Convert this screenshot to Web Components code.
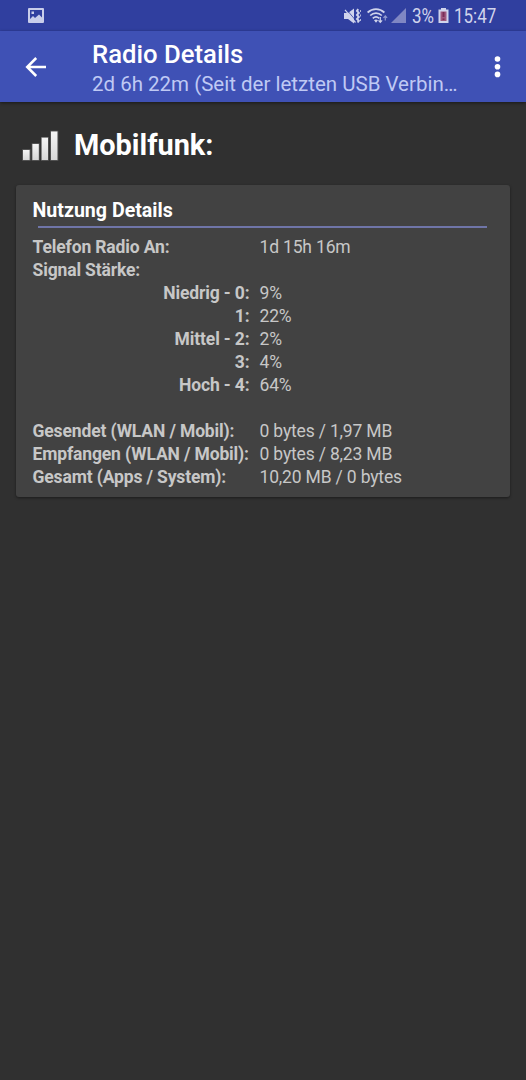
<!DOCTYPE html>
<html lang="de">
<head>
<meta charset="utf-8">
<title>Radio Details</title>
<style>
    body {
        margin: 0;
        background: #303030;
        font-family: Roboto, "Liberation Sans", sans-serif;
    }
</style>
</head>
<body>
<radio-screen></radio-screen>
<script>
/**
 * Base class: puts the markup of template() into an open shadow root
 */
class BaseElement extends HTMLElement {
    constructor() {
        super();
        const shadowRoot = this.attachShadow({ mode: 'open' });
        const template = document.createElement('template');
        template.innerHTML = this.template();
        shadowRoot.appendChild(document.importNode(template.content, true));
    }
}

/**
 * Android status bar
 */
class StatusBar extends BaseElement {
    template() {
        return `
            <style>
                :host {
                    display: flex;
                    align-items: center;
                    box-sizing: border-box;
                    height: 31px;
                    padding: 0 30px 0 28px;
                    background: #303f9f;
                    color: #d0d4ec;
                    font-size: 19.500px;
                    line-height: 31px;
                }
                svg { display: block; flex: none; }
                .space { flex: 1; }
                .mute { margin-right: 6px; }
                .wifi { margin-right: 3px; }
                .signal { margin-right: 6px; }
                .percent { width: 26px; }
                .battery { margin-right: 5px; }
                .time { width: 42px; }
                /* the status font is slightly condensed */
                span {
                    display: block;
                    padding-top: 1px;
                    white-space: nowrap;
                    transform: scaleX(.87);
                    transform-origin: 0 50%;
                }
            </style>
            <svg width="16" height="15" viewBox="0 0 16 15">
                <path fill="#c8cdea" fill-rule="evenodd" d="M1 0h14q1 0 1 1v13q0 1-1 1H1q-1 0-1-1V1q0-1 1-1zM2 2v9l3-3 2 2 4-3.500 3 3V2zM3.500 3.500h2.500v2.500h-2.500z"/>
            </svg>
            <div class="space"></div>
            <svg class="mute" width="17" height="16" viewBox="0 0 17 16" fill="none" stroke="#d0d4ec">
                <path fill="#d0d4ec" stroke="none" d="M0 5h4l6-4.500v15l-6-4.500H0z"/>
                <path stroke="#303f9f" stroke-width=".8" d="M2.500 1.500l9 10.700"/>
                <path stroke-width="1.200" d="M1 1.800l10.500 12.700"/>
                <path stroke-width="2" d="M14.200 1.200l-1.200 1.700 1.800 2-1.800 2 1.800 2-1.800 2 1.800 2-1.200 1.600"/>
                <path stroke-width=".8" d="M16.500 2v2M16.500 6.500v2M16.500 11v2"/>
            </svg>
            <svg class="wifi" width="21" height="16" viewBox="0 0 21 16" fill="none" stroke="#d0d4ec" stroke-width="1.700">
                <path d="M.6 4.500C5.500 0 12.500 0 17.400 4.500M3.200 7.500c3.400-3.200 8.200-3.200 11.600 0M5.800 10.300c2-1.800 4.400-1.800 6.400 0"/>
                <path fill="#d0d4ec" stroke="none" d="M7 12.300q2-1.400 4 0L9 14.700z"/>
                <path stroke-width="1.200" d="M13.300 9v5M11.500 12.300l1.800 2 1.800-2"/>
                <path stroke="#929bd0" stroke-width="1.200" d="M18.300 12.500V8M16.500 9.800l1.800-2 1.800 2"/>
            </svg>
            <svg class="signal" width="15" height="15" viewBox="0 0 15 15"><path fill="#8087c3" d="M15 0v15H0z"/></svg>
            <span class="percent">3%</span>
            <svg class="battery" width="11" height="15" viewBox="0 0 11 15">
                <path fill="#d0d4ec" d="M3 0h5v1.500H10.500V15H.5V1.500H3z"/>
                <path fill="#a0587f" d="M2.500 3.500h6v9.500h-6z"/>
                <path fill="#792e58" d="M4.500 4h2v5h-2zM4.500 10.500h2v1.500h-2z"/>
            </svg>
            <span class="time">15:47</span>
        `;
    }
}

/**
 * App bar with back arrow, title, subtitle and overflow menu
 */
class AppBar extends BaseElement {
    template() {
        return `
            <style>
                :host {
                    display: flex;
                    align-items: center;
                    box-sizing: border-box;
                    height: 71px;
                    padding: 0 25px 0 25px;
                    background: #3f51b5;
                    box-shadow: 0 1px 3px rgba(0, 0, 0, .5);
                }
                svg { display: block; flex: none; }
                .titles {
                    flex: 1;
                    margin-left: 46px;
                    padding-top: 2px;
                    white-space: nowrap;
                }
                .title {
                    color: #fff;
                    font-size: 25.700px;
                    font-weight: 500;
                    line-height: 32px;
                }
                .subtitle {
                    color: #bfc9f4;
                    font-size: 20.500px;
                    line-height: 28px;
                }
            </style>
            <svg width="21" height="20" viewBox="0 0 21 20" fill="none" stroke="#fff" stroke-width="2.500">
                <path d="M21 10H2.500M11.200 1l-9 9 9 9"/>
            </svg>
            <div class="titles">
                <div class="title"><slot name="title"></slot></div>
                <div class="subtitle"><slot name="subtitle"></slot></div>
            </div>
            <svg width="7" height="22" viewBox="0 0 7 22" fill="#fff">
                <circle cx="3.500" cy="3" r="2.800"/>
                <circle cx="3.500" cy="10.700" r="2.800"/>
                <circle cx="3.500" cy="18.400" r="2.800"/>
            </svg>
        `;
    }
}

/**
 * Section heading with the signal bars icon
 */
class SectionHeading extends BaseElement {
    template() {
        return `
            <style>
                :host {
                    display: flex;
                    align-items: center;
                    height: 83px;
                    padding-left: 21px;
                    color: #fff;
                    font-size: 28.900px;
                    font-weight: 700;
                }
                svg { display: block; flex: none; margin: 6px 14px 0 0; }
                .text { padding-top: 2px; }
            </style>
            <svg width="39" height="33" viewBox="0 0 39 33">
                <defs>
                    <linearGradient id="bar" x1="0" y1="0" x2="0" y2="1">
                        <stop offset="0" stop-color="#f4f4f4"/>
                        <stop offset="1" stop-color="#d8d8d8"/>
                    </linearGradient>
                </defs>
                <g fill="#8a8a8a" opacity=".5">
                    <path d="M1.300 19.300h8.200v11.400H1.300zM10.700 13.300h7.800v17.400h-7.800zM20 7h7.700v23.700H20zM29.300 .8h8v29.900h-8z"/>
                </g>
                <g fill="url(#bar)">
                    <path d="M2 20h6.600v10H2z"/>
                    <path d="M11.400 14h6.400v16h-6.400z"/>
                    <path d="M20.700 7.700h6.300V30h-6.300z"/>
                    <path d="M30 1.500h6.400V30H30z"/>
                </g>
            </svg>
            <div class="text"><slot></slot></div>
        `;
    }
}

/**
 * Card with a title and an underline
 */
class DetailCard extends BaseElement {
    template() {
        return `
            <style>
                :host {
                    display: block;
                    box-sizing: border-box;
                    height: 312px;
                    margin: 0 16px;
                    padding: 14px 23px 0 16.500px;
                    border-radius: 3px;
                    background: #424242;
                    box-shadow: 0 1px 3px rgba(0, 0, 0, .45);
                }
                .caption {
                    color: #fff;
                    font-size: 19.600px;
                    font-weight: 700;
                    line-height: 24px;
                }
                .line {
                    height: 2px;
                    margin: 3px 0 8px 5.500px;
                    background: #6f75a8;
                }
            </style>
            <div class="caption"><slot name="caption"></slot></div>
            <div class="line"></div>
            <slot></slot>
        `;
    }
}

/**
 * One label / value line; "indent" aligns the label to the right
 */
class DetailRow extends BaseElement {
    template() {
        return `
            <style>
                :host {
                    display: grid;
                    grid-template-columns: 217px 1fr;
                    column-gap: 10px;
                    height: 23px;
                    color: #c7c7c7;
                    font-size: 17.500px;
                    letter-spacing: -.17px;
                    line-height: 23px;
                    white-space: nowrap;
                }
                .label { font-weight: 700; letter-spacing: -.14px; }
                :host([indent]) .label { text-align: right; }
            </style>
            <div class="label"><slot name="label"></slot></div>
            <div><slot></slot></div>
        `;
    }
}

/**
 * Whole screen
 */
class RadioScreen extends BaseElement {
    template() {
        return `
            <style>
                :host {
                    display: flex;
                    flex-direction: column;
                    height: 1080px;
                    overflow: hidden;
                }
            </style>
            <status-bar></status-bar>
            <app-bar>
                <span slot="title">Radio Details</span>
                <span slot="subtitle">2d 6h 22m (Seit der letzten USB Verbin…</span>
            </app-bar>
            <section-heading>Mobilfunk:</section-heading>
            <detail-card>
                <span slot="caption">Nutzung Details</span>
                <detail-row><span slot="label">Telefon Radio An:</span>1d 15h 16m</detail-row>
                <detail-row><span slot="label">Signal Stärke:</span></detail-row>
                <detail-row indent><span slot="label">Niedrig - 0:</span>9%</detail-row>
                <detail-row indent><span slot="label">1:</span>22%</detail-row>
                <detail-row indent><span slot="label">Mittel - 2:</span>2%</detail-row>
                <detail-row indent><span slot="label">3:</span>4%</detail-row>
                <detail-row indent><span slot="label">Hoch - 4:</span>64%</detail-row>
                <detail-row></detail-row>
                <detail-row><span slot="label">Gesendet (WLAN / Mobil):</span>0 bytes / 1,97 MB</detail-row>
                <detail-row><span slot="label">Empfangen (WLAN / Mobil):</span>0 bytes / 8,23 MB</detail-row>
                <detail-row><span slot="label">Gesamt (Apps / System):</span>10,20 MB / 0 bytes</detail-row>
            </detail-card>
        `;
    }
}

customElements.define('status-bar', StatusBar);
customElements.define('app-bar', AppBar);
customElements.define('section-heading', SectionHeading);
customElements.define('detail-card', DetailCard);
customElements.define('detail-row', DetailRow);
customElements.define('radio-screen', RadioScreen);
</script>
</body>
</html>
